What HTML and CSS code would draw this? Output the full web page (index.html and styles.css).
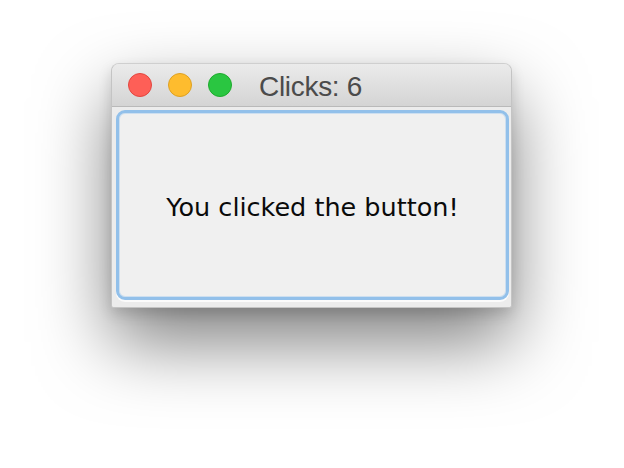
FILE: index.html
```html
<!DOCTYPE html>
<html>
<head>
<meta charset="utf-8">
<link rel="stylesheet" href="styles.css">
</head>
<body>
<div class="window">
  <div class="titlebar">
    <span class="light red"></span>
    <span class="light yellow"></span>
    <span class="light green"></span>
    <span class="title">Clicks: 6</span>
  </div>
  <div class="content">
    <button class="btn">You clicked the button!</button>
  </div>
</div>
</body>
</html>
```
FILE: styles.css
```css
html, body {
  margin: 0;
  padding: 0;
  background: #ffffff;
}
html {
  height: 100%;
}
body {
  min-height: 468px;
  box-sizing: border-box;
  padding: 63px 0 0 111px;
}
.window {
  width: 401px;
  height: 245px;
  box-sizing: border-box;
  border: 1px solid #c4c4c4;
  border-top-color: #cfcfcf;
  border-radius: 8px 8px 3px 3px;
  background: #ececec;
  box-shadow: 0 34px 72px rgba(0, 0, 0, 0.5), 0 6px 14px rgba(0, 0, 0, 0.14);
  display: flex;
  flex-direction: column;
  overflow: hidden;
}
.titlebar {
  height: 42px;
  flex: none;
  display: flex;
  align-items: center;
  padding-left: 16px;
  gap: 16px;
  background: linear-gradient(#ebebeb, #d4d4d4);
  border-bottom: 1px solid #b9b9b9;
}
.light {
  width: 24px;
  height: 24px;
  box-sizing: border-box;
  border-radius: 50%;
  flex: none;
}
.red { background: #fe5f57; border: 1px solid #e2463f; }
.yellow { background: #febc2e; border: 1px solid #dea123; }
.green { background: #2ac641; border: 1px solid #1eab2d; }
.title {
  margin-left: 11px;
  font-family: "Liberation Sans", Arial, sans-serif;
  font-size: 28px;
  letter-spacing: -0.3px;
  color: #4b4b4b;
  line-height: 1;
  margin-top: 3px;
}
.content {
  flex: 1;
  display: flex;
  padding: 3px 2px 7px 4px;
  background: #ececec;
}
.btn {
  flex: 1;
  margin: 0;
  border: 3px solid #92c0ea;
  border-radius: 9px;
  background: #f0f0f0;
  box-shadow: inset 0 0 0 1px rgba(170, 205, 240, 0.5), 0 2px 0 #fbfbfb;
  font-family: "DejaVu Sans", sans-serif;
  font-size: 25.5px;
  color: #0a0a0a;
  padding: 3px 0 0 0;
  display: flex;
  align-items: center;
  justify-content: center;
}
```
